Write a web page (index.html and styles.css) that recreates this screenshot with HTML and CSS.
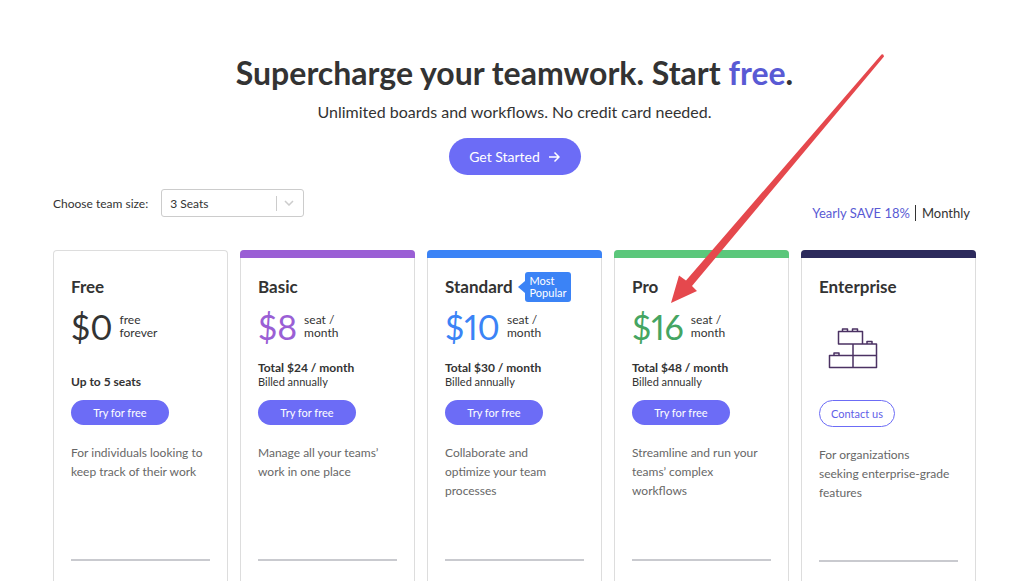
FILE: index.html
```html
<!DOCTYPE html>
<html lang="en">
<head>
<meta charset="utf-8">
<meta name="viewport" content="width=device-width, initial-scale=1">
<title>Pricing</title>
<link rel="stylesheet" href="styles.css">
</head>
<body>
<main class="page">
  <header class="hero">
    <h1 class="hero-title">Supercharge your teamwork. Start <span class="accent">free</span>.</h1>
    <p class="hero-sub">Unlimited boards and workflows. No credit card needed.</p>
    <button class="btn btn-large" type="button">Get Started
      <svg class="btn-arrow" viewBox="0 0 12 12" aria-hidden="true"><path d="M1 6h10M6.500 1.500L11 6l-4.500 4.500"/></svg>
    </button>
  </header>

  <div class="controls">
    <div class="team">
      <label for="seats">Choose team size:</label>
      <div class="select">
        <select id="seats"><option>3 Seats</option><option>5 Seats</option><option>10 Seats</option></select>
        <svg class="chevron" viewBox="0 0 10 6" aria-hidden="true"><path d="M1 1l4 4 4-4"/></svg>
      </div>
    </div>
    <div class="billing">
      <a class="billing-on" href="#yearly">Yearly SAVE 18%</a>
      <a class="billing-off" href="#monthly">Monthly</a>
    </div>
  </div>

  <section class="plans">
    <article class="card">
      <div class="card-head"><h2>Free</h2></div>
      <div class="price"><span class="amount">$0</span><span class="unit">free<br>forever</span></div>
      <div class="total"><strong>Up to 5 seats</strong></div>
      <button class="btn" type="button">Try for free</button>
      <p class="desc">For individuals looking to keep track of their work</p>
      <hr>
    </article>

    <article class="card bar basic">
      <div class="card-head"><h2>Basic</h2></div>
      <div class="price"><span class="amount">$8</span><span class="unit">seat /<br>month</span></div>
      <div class="total"><strong>Total $24 / month</strong><span>Billed annually</span></div>
      <button class="btn" type="button">Try for free</button>
      <p class="desc">Manage all your teams’ work in one place</p>
      <hr>
    </article>

    <article class="card bar standard">
      <div class="card-head"><h2>Standard</h2><span class="badge">Most<br>Popular</span></div>
      <div class="price"><span class="amount">$10</span><span class="unit">seat /<br>month</span></div>
      <div class="total"><strong>Total $30 / month</strong><span>Billed annually</span></div>
      <button class="btn" type="button">Try for free</button>
      <p class="desc">Collaborate and<br>optimize your team<br>processes</p>
      <hr>
    </article>

    <article class="card bar pro">
      <div class="card-head"><h2>Pro</h2></div>
      <div class="price"><span class="amount">$16</span><span class="unit">seat /<br>month</span></div>
      <div class="total"><strong>Total $48 / month</strong><span>Billed annually</span></div>
      <button class="btn" type="button">Try for free</button>
      <p class="desc">Streamline and run your<br>teams’ complex<br>workflows</p>
      <hr>
      <svg class="pointer" viewBox="0 0 218 254" aria-hidden="true"><path d="M3 251L11 223.500 18 228.500 213.500 2.500Q215.500 1.500 216 4.500L24 234 29 239Z"/></svg>
    </article>

    <article class="card bar enterprise">
      <div class="card-head"><h2>Enterprise</h2></div>
      <div class="art">
        <svg class="bricks" viewBox="0 0 50 42" aria-hidden="true">
          <path d="M10.500 4.500h24v12.500h-24zM25 17h23.500v11.500h-23.500zM1.500 28.500h23.500v12h-23.500zM25 28.500h23.500v12h-23.500z"/>
          <path d="M14.500 4.500v-2.500h5v2.500M24.500 4.500v-2.500h5v2.500M39 17v-2.500h5v2.500M6 28.500v-2.500h5v2.500"/>
        </svg>
      </div>
      <button class="btn btn-outline" type="button">Contact us</button>
      <p class="desc">For organizations<br>seeking enterprise-grade<br>features</p>
      <hr>
    </article>
  </section>
</main>
</body>
</html>
```
FILE: styles.css
```css
* { box-sizing: border-box; }

body {
  margin: 0;
  background: #fff;
  color: #333;
  font-family: Lato, "Open Sans", sans-serif;
  font-size: 13px;
}

h1, h2, p { margin: 0; }
a { text-decoration: none; }
svg { fill: none; }

.page {
  display: flex;
  flex-direction: column;
  min-height: 100vh;
  padding: 53px 48px 0 53px;
}

.hero {
  display: flex;
  flex-direction: column;
  align-items: center;
  text-align: center;
}

.hero-title { font-size: 32px; line-height: 40px; font-weight: 700; }
.accent { color: #595ad4; }
.hero-sub { margin-top: 7px; font-size: 16px; line-height: 24px; }

.btn {
  display: flex;
  align-items: center;
  justify-content: center;
  width: 98px;
  height: 25px;
  padding: 0;
  border: 0;
  border-radius: 20px;
  background: #6c6cf6;
  color: #fff;
  font-family: inherit;
  font-size: 11px;
  cursor: pointer;
}

.btn-large {
  gap: 8px;
  width: 132px;
  height: 37px;
  margin-top: 14px;
  font-size: 14px;
}

.btn-arrow { width: 12px; height: 12px; stroke: #fff; stroke-width: 1.5; }

.btn-outline {
  width: 76px;
  height: 27px;
  border: 1px solid #6c6cf6;
  background: #fff;
  color: #5f60e8;
}

.controls {
  display: flex;
  align-items: flex-end;
  justify-content: space-between;
  height: 34px;
  margin: 14px 6px 27px 0;
}

.team {
  display: flex;
  align-items: center;
  align-self: flex-start;
  gap: 13px;
  font-size: 12px;
}

.select {
  display: grid;
  grid-template-columns: 1fr 28px;
  align-items: center;
  width: 143px;
  height: 28px;
  border: 1px solid #ccc;
  border-radius: 3px;
}

.select select {
  grid-area: 1 / 1 / 2 / 3;
  height: 100%;
  padding: 0 8px;
  border: 0;
  appearance: none;
  background: linear-gradient(#ccc, #ccc) 114px center / 1px 15px no-repeat;
  color: #333;
  font-family: inherit;
  font-size: 12px;
}

.chevron {
  grid-area: 1 / 2;
  justify-self: center;
  width: 10px;
  height: 6px;
  stroke: #ccc;
  stroke-width: 1.500;
  pointer-events: none;
}

.billing { display: flex; font-size: 13px; line-height: 16px; padding-bottom: 2px; }
.billing a + a { margin-left: 5px; padding-left: 6px; border-left: 1px solid #333; }
.billing-on { color: #595ad4; }
.billing-off { color: #333; }

.plans {
  display: grid;
  grid-template-columns: repeat(5, minmax(0, 1fr));
  flex: 1;
  gap: 12px;
}

.card {
  position: relative;
  padding: 24px 17px 0;
  border: 1px solid #ddd;
  border-bottom: 0;
  border-radius: 4px 4px 0 0;
}

.bar::before {
  content: "";
  position: absolute;
  inset: -1px -1px auto;
  height: 8px;
  border-radius: 4px 4px 0 0;
  background: var(--plan);
}

.basic { --plan: #9a5fd5; --amount: #9a5fd5; }
.standard { --plan: #3b83f6; --amount: #3b83f6; }
.pro { --plan: #5bc77b; --amount: #45a562; }
.enterprise { --plan: #2c2a5c; }

.card-head { display: flex; align-items: center; gap: 12px; height: 24px; }
h2 { font-size: 17px; line-height: 24px; font-weight: 700; }

.badge {
  position: relative;
  padding: 3px 5px;
  border-radius: 3px;
  background: #3b83f6;
  color: #fff;
  font-size: 11px;
  line-height: 12px;
}

.badge::before {
  content: "";
  position: absolute;
  top: 9px;
  right: 100%;
  border: 6px solid transparent;
  border-left: 0;
  border-right: 7px solid #3b83f6;
}

.price { display: flex; align-items: center; gap: 7px; height: 40px; margin-top: 8px; }
.amount {
  color: var(--amount, #333);
  font-size: 34px;
  line-height: 40px;
  font-weight: 400;
  font-variant-numeric: proportional-nums;
}
.unit { padding-bottom: 2px; font-size: 12px; line-height: 13px; }

.total {
  display: flex;
  flex-direction: column;
  justify-content: flex-end;
  height: 28px;
  margin: 14px 0 11px;
  font-size: 11px;
  line-height: 14px;
}

.total strong { font-size: 12px; }

.desc {
  height: 95px;
  margin-top: 18px;
  color: #676767;
  font-size: 12px;
  line-height: 19px;
}

hr { height: 2px; margin: 21px 0 0; border: 0; background: #c9cacf; }

.enterprise hr { margin-top: 20px; }

.art { height: 82px; margin: 8px 0 11px; padding: 20px 0 0 9px; }
.bricks { display: block; width: 50px; height: 42px; stroke: #4b3263; stroke-width: 1.500; stroke-linejoin: round; }

.pointer {
  position: absolute;
  z-index: 1;
  top: -199px;
  left: 53px;
  width: 218px;
  height: 254px;
  fill: #e5484d;
  pointer-events: none;
}
```
